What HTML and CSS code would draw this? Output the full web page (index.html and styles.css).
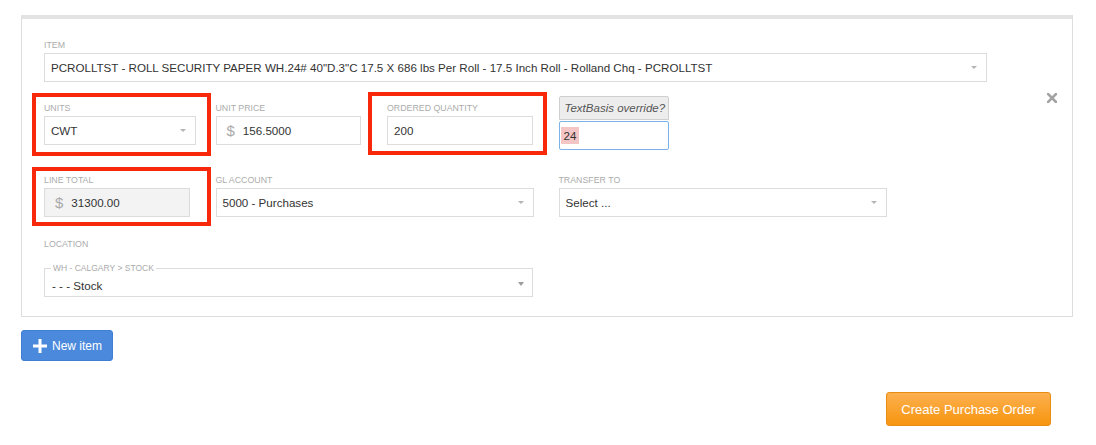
FILE: index.html
```html
<!DOCTYPE html>
<html lang="en">
<head>
    <meta charset="UTF-8">
    <title>Purchase Order - Line Items</title>
    <link rel="stylesheet" href="styles.css">
</head>
<body>

<div class="page">

    <!-- line item panel -->
    <div class="panel">
        <div class="field w-item">
            <label>Item</label>
            <div class="input select">PCROLLTST - ROLL SECURITY PAPER WH.24# 40"D.3"C 17.5 X 686 lbs Per Roll - 17.5 Inch Roll - Rolland Chq - PCROLLTST</div>
        </div>

        <div class="row">
            <div class="col">
                <div class="field w-units mark mark-units">
                    <label>Units</label>
                    <div class="input select">CWT</div>
                </div>
            </div>
            <div class="col">
                <div class="field w-price">
                    <label>Unit Price</label>
                    <div class="input"><span class="dollar">$</span>156.5000</div>
                </div>
            </div>
            <div class="col">
                <div class="field w-qty mark mark-qty">
                    <label>Ordered Quantity</label>
                    <div class="input">200</div>
                </div>
            </div>
            <div class="col">
                <div class="field w-basis basis">
                    <div class="basis-label">TextBasis override?</div>
                    <div class="input focus"><span class="picked">24</span></div>
                </div>
            </div>
        </div>

        <div class="row">
            <div class="col">
                <div class="field w-total mark mark-total">
                    <label>Line Total</label>
                    <div class="input readonly"><span class="dollar">$</span>31300.00</div>
                </div>
            </div>
            <div class="col wide">
                <div class="field w-gl">
                    <label>GL Account</label>
                    <div class="input select">5000 - Purchases</div>
                </div>
            </div>
            <div class="col wide">
                <div class="field w-transfer">
                    <label>Transfer To</label>
                    <div class="input select">Select ...</div>
                </div>
            </div>
        </div>

        <div class="field w-location location">
            <label>Location</label>
            <div class="input select group">
                <span class="legend">WH - CALGARY &gt; STOCK</span>
                - - - Stock
            </div>
        </div>

        <!-- remove line -->
        <svg class="remove" width="10" height="10" viewBox="0 0 10 10">
            <path d="M1 1 L9 9 M9 1 L1 9" stroke="#a3a3a3" stroke-width="2.6" stroke-linecap="square"/>
        </svg>
    </div>

    <button class="btn btn-blue">
        <svg width="14" height="14" viewBox="0 0 14 14">
            <path d="M7 0 V14 M0 7 H14" stroke="#fff" stroke-width="3"/>
        </svg>
        New item
    </button>

    <div class="footer">
        <button class="btn btn-orange">Create Purchase Order</button>
    </div>

</div>

</body>
</html>
```

FILE: styles.css
```css
body {
    margin: 0;
    font-family: "Liberation Sans", Arial, sans-serif;
    color: #333;
    background: #fff;
}
.page {
    padding: 15px 0 0 21px;
    width: 1052px;
}
.panel {
    position: relative;
    box-sizing: border-box;
    width: 1052px;
    border: 1px solid #dddddd;
    border-top: 4px solid #e3e3e3;
    padding: 20px 22px 19px 22px;
}
.row {
    display: flex;
    align-items: flex-start;
    margin-top: 20px;
}
.row + .row {
    margin-top: 24px;
}
.col {
    width: 171.5px;
    flex: none;
}
.col.wide {
    width: 343px;
}
.field {
    position: relative;
}
.field label {
    display: block;
    font-size: 8.8px;
    line-height: 12px;
    height: 12px;
    margin-bottom: 2px;
    text-transform: uppercase;
    color: #acacac;
}
.input {
    position: relative;
    box-sizing: border-box;
    height: 29px;
    border: 1px solid #dcdcdc;
    padding: 0 24px 0 6px;
    font-size: 11.6px;
    line-height: 27px;
    white-space: nowrap;
    overflow: hidden;
    background: #fff;
}
.select::after {
    content: "";
    position: absolute;
    right: 9px;
    top: 12px;
    border-left: 3px solid transparent;
    border-right: 3px solid transparent;
    border-top: 3px solid #b5b5b5;
}
.dollar {
    font-size: 15px;
    color: #aaa;
    margin: 0 8px 0 4px;
    vertical-align: -1px;
}
.readonly {
    background: #f3f3f3;
}

/* widths */
.w-item { width: 943px; }
.w-units { width: 152px; }
.w-price { width: 145px; }
.w-qty { width: 146px; }
.w-basis { width: 110px; }
.w-total { width: 146px; }
.w-gl { width: 318px; }
.w-transfer { width: 328px; }
.w-location { width: 489px; }

/* red review frames */
.mark::after {
    content: "";
    position: absolute;
    border: 4px solid #f8290a;
}
.mark-units::after { left: -12px; right: -15px; top: -9px; bottom: -11px; }
.mark-qty::after { left: -19px; right: -14px; top: -10px; bottom: -10px; }
.mark-total::after { left: -12px; right: -21px; top: -7px; bottom: -9px; }

/* basis override */
.basis {
    margin-top: -6px;
}
.basis-label {
    box-sizing: border-box;
    height: 24px;
    border: 1px solid #cfcfcf;
    border-radius: 2px 2px 0 0;
    background: #ededed;
    font-size: 11.5px;
    font-style: italic;
    line-height: 22px;
    color: #555;
    padding-left: 5px;
}
.focus {
    margin-top: 1px;
    border: 1px solid #7db2e8;
    border-radius: 2px;
    padding-left: 1px;
}
.picked {
    background: #f4c5c5;
    padding: 2px 3px;
}

/* location */
.location {
    margin-top: 21px;
}
.location label {
    margin-bottom: 18px;
}
.group {
    overflow: visible;
    line-height: 29px;
    padding-left: 7px;
    padding-top: 2px;
}
.group::after {
    right: 8px;
    top: 13px;
    border-top-color: #9c9c9c;
    border-left-width: 3.5px;
    border-right-width: 3.5px;
    border-top-width: 4px;
}
.legend {
    position: absolute;
    left: 6px;
    top: -7px;
    padding: 0 2px;
    background: #fff;
    font-size: 8.5px;
    line-height: 12px;
    color: #aaa;
}
.remove {
    position: absolute;
    right: 15px;
    top: 74px;
}

/* buttons */
.btn {
    font-family: "Liberation Sans", Arial, sans-serif;
    cursor: pointer;
    border-radius: 3px;
    color: #fff;
}
.btn-blue {
    display: flex;
    align-items: center;
    gap: 5px;
    margin-top: 13px;
    box-sizing: border-box;
    width: 92px;
    height: 31px;
    padding: 0 0 0 11px;
    border: 1px solid #3f7fd3;
    background: #4a89dc;
    font-size: 12px;
}
.footer {
    display: flex;
    justify-content: flex-end;
    padding-right: 22px;
    margin-top: 31px;
}
.btn-orange {
    box-sizing: border-box;
    width: 165px;
    height: 34px;
    border: 1px solid #e98c14;
    background: linear-gradient(#fcb04f, #f7950f);
    font-size: 13px;
    padding: 0;
}
```
